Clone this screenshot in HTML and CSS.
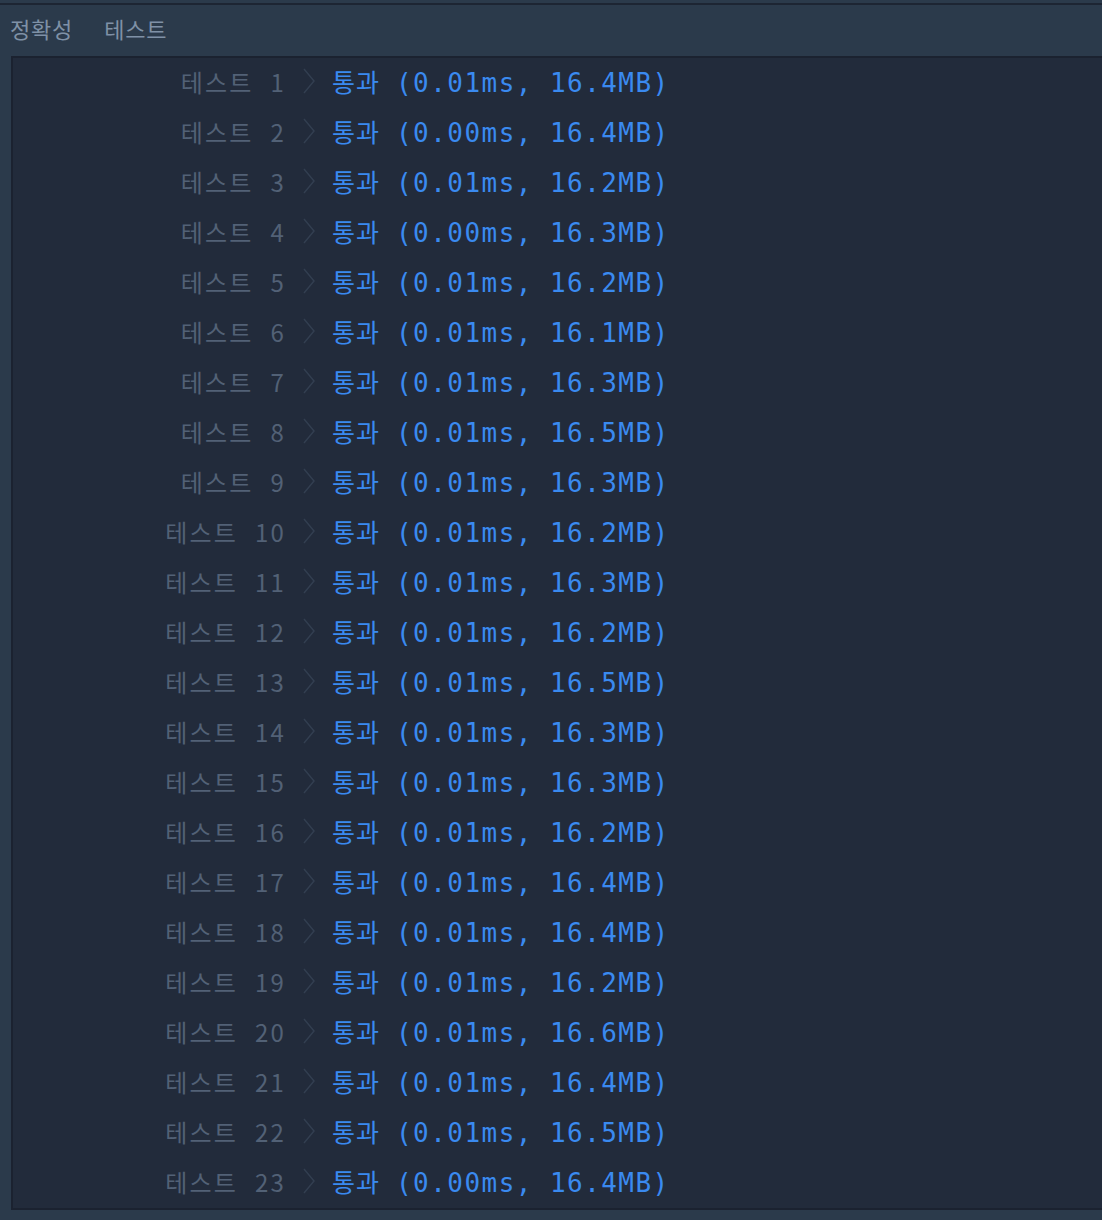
FILE: index.html
```html
<!DOCTYPE html>
<html lang="ko">
<head>
    <meta charset="UTF-8">
    <title>채점 결과</title>
    <link rel="stylesheet" href="styles.css">
</head>
<body>
<div class="top-line"></div>
<div class="result-header">
    <span class="header-item">정확성</span>
    <span class="header-item">테스트</span>
</div>

<div class="result-panel">
    <table class="result-table">
        <tbody id="rows"></tbody>
    </table>
</div>

<script>
    // 채점 결과 데이터 (시간, 메모리)
    const results = [
        ['0.01', '16.4'], ['0.00', '16.4'], ['0.01', '16.2'], ['0.00', '16.3'],
        ['0.01', '16.2'], ['0.01', '16.1'], ['0.01', '16.3'], ['0.01', '16.5'],
        ['0.01', '16.3'], ['0.01', '16.2'], ['0.01', '16.3'], ['0.01', '16.2'],
        ['0.01', '16.5'], ['0.01', '16.3'], ['0.01', '16.3'], ['0.01', '16.2'],
        ['0.01', '16.4'], ['0.01', '16.4'], ['0.01', '16.2'], ['0.01', '16.6'],
        ['0.01', '16.4'], ['0.01', '16.5'], ['0.00', '16.4']
    ];

    const chevron = '<svg class="chevron" width="12" height="26" viewBox="0 0 12 26">' +
        '<polyline points="1,1 11,13 1,25" fill="none" stroke="currentColor" stroke-width="1.4"/></svg>';

    const tbody = document.getElementById('rows');
    results.forEach(([time, mem], i) => {
        const tr = document.createElement('tr');
        tr.innerHTML =
            '<td class="case-name">테스트 ' + (i + 1) + '</td>' +
            '<td class="case-arrow">' + chevron + '</td>' +
            '<td class="case-result"><span class="pass">통과</span>' +
            '<span class="detail">(' + time + 'ms, ' + mem + 'MB)</span></td>';
        tbody.appendChild(tr);
    });
</script>
</body>
</html>
```

FILE: styles.css
```css
* {
    margin: 0;
    padding: 0;
    box-sizing: border-box;
}

body {
    background: #2b3a4b;
    font-family: "Noto Sans CJK KR", "Noto Sans", sans-serif;
    min-height: 100vh;
    overflow: hidden;
}

.top-line {
    height: 5px;
    border-bottom: 2px solid #1d2533;
}

/* 결과 헤더 */
.result-header {
    height: 51px;
    padding: 9px 0 0 10px;
    display: flex;
    gap: 31px;
    color: #7f91a6;
    font-size: 22px;
    line-height: 28px;
    letter-spacing: 0.8px;
}

/* 결과 패널 */
.result-panel {
    margin-left: 11px;
    background: #222b3b;
    border-top: 2px solid #1b2230;
    border-left: 2px solid #1b2230;
    border-bottom: 2px solid #1b2230;
}

.result-table {
    border-collapse: collapse;
}

.result-table td {
    height: 50px;
    padding-bottom: 4px;
    vertical-align: middle;
    white-space: nowrap;
}

.case-name {
    width: 274px;
    text-align: right;
    color: #526176;
    font-size: 24px;
    letter-spacing: 2.2px;
    word-spacing: 8px;
    padding-right: 1px;
}

.case-arrow {
    width: 45px;
    padding-left: 16px;
    color: #333f51;
}

.chevron {
    display: block;
}

.case-result {
    color: #3a8af0;
    font-size: 25px;
}

.pass {
    letter-spacing: 1px;
}

.detail {
    font-family: "DejaVu Sans Mono", monospace;
    font-size: 26px;
    letter-spacing: 1.45px;
    margin-left: 16px;
}
```
